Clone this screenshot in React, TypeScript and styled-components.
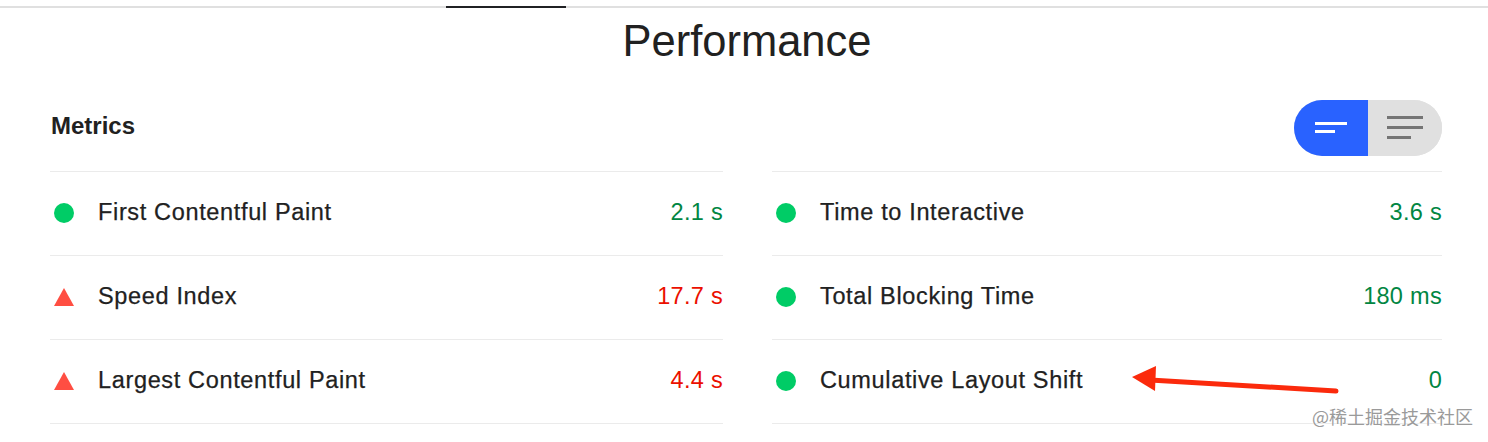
import React from 'react';
import styled, { createGlobalStyle } from 'styled-components';

const GlobalStyle = createGlobalStyle`
    html, body {
        margin: 0;
        padding: 0;
        background: #ffffff;
    }
    body {
        font-family: 'Liberation Sans', Arial, sans-serif;
        color: #212121;
    }
`;

const Page = styled.div`
    position: relative;
    width: 1488px;
    height: 442px;
    overflow: hidden;
    background: #fff;
`;

const TabRule = styled.div`
    margin-top: 6px;
    height: 2px;
    background: #e0e0e0;
    display: flex;
`;

const ActiveTab = styled.div`
    margin-left: 446px;
    width: 120px;
    background: #202124;
`;

const Title = styled.h1`
    margin: 0;
    padding-top: 8px;
    padding-left: 6px;
    text-align: center;
    font-size: 43.5px;
    font-weight: 400;
    line-height: 50px;
    color: #212121;
`;

const Section = styled.section`
    padding: 34px 46px 0 50px;
`;

const Header = styled.div`
    display: flex;
    align-items: center;
    justify-content: space-between;
    height: 56px;
    margin-bottom: 15px;
`;

const SectionTitle = styled.h2`
    margin: 0 0 4px 1px;
    font-size: 24px;
    font-weight: 700;
    color: #212121;
`;

const Toggle = styled.div`
    display: flex;
    width: 148px;
    height: 56px;
    border-radius: 28px;
    overflow: hidden;
    background: #e0e0e0;
`;

const ToggleHalf = styled.div<{ $active?: boolean }>`
    flex: 1;
    display: flex;
    align-items: center;
    justify-content: center;
    background: ${p => (p.$active ? '#2962ff' : '#e0e0e0')};
`;

const Grid = styled.div`
    display: grid;
    grid-template-columns: 673px 1fr;
    column-gap: 49px;
`;

const Column = styled.div`
    border-bottom: 1px solid #ebebeb;
`;

const Row = styled.div`
    box-sizing: border-box;
    display: flex;
    align-items: center;
    height: 84px;
    border-top: 1px solid #ebebeb;
    padding-bottom: 2px;
`;

const IconSlot = styled.div`
    width: 48px;
    padding-left: 4px;
    box-sizing: border-box;
    display: flex;
    align-items: center;
`;

const PassDot = styled.span`
    display: block;
    width: 20px;
    height: 20px;
    border-radius: 50%;
    background: #0c6;
`;

const FailTriangle = styled.span`
    display: block;
    width: 0;
    height: 0;
    border-left: 10px solid transparent;
    border-right: 10px solid transparent;
    border-bottom: 18px solid #ff4e42;
`;

const Label = styled.span`
    flex: 1;
    font-size: 23.5px;
    color: #212121;
    letter-spacing: 0.65px;
    -webkit-text-stroke: 0.25px #212121;
`;

const Value = styled.span<{ $fail?: boolean }>`
    font-size: 23.5px;
    letter-spacing: 0.3px;
    color: ${p => (p.$fail ? '#eb0f00' : '#018642')};
`;

const Arrow = styled.svg`
    position: absolute;
    left: 1120px;
    top: 356px;
`;

const Watermark = styled.div`
    position: absolute;
    right: 15px;
    top: 403px;
    font-family: 'Noto Sans CJK SC', 'Liberation Sans', sans-serif;
    font-size: 18px;
    color: #9a9a9a;
    text-shadow: 0 0 2px #fff;
`;

type Metric = { label: string; value: string; fail?: boolean };

const left: Metric[] = [
    { label: 'First Contentful Paint', value: '2.1 s' },
    { label: 'Speed Index', value: '17.7 s', fail: true },
    { label: 'Largest Contentful Paint', value: '4.4 s', fail: true },
];

const right: Metric[] = [
    { label: 'Time to Interactive', value: '3.6 s' },
    { label: 'Total Blocking Time', value: '180 ms' },
    { label: 'Cumulative Layout Shift', value: '0' },
];

function MetricColumn({ items }: { items: Metric[] }) {
    return (
        <Column>
            {items.map(m => (
                <Row key={m.label}>
                    <IconSlot>{m.fail ? <FailTriangle /> : <PassDot />}</IconSlot>
                    <Label>{m.label}</Label>
                    <Value $fail={m.fail}>{m.value}</Value>
                </Row>
            ))}
        </Column>
    );
}

export default function App() {
    return (
        <Page>
            <GlobalStyle />
            <TabRule>
                <ActiveTab />
            </TabRule>
            <Title>Performance</Title>
            <Section>
                <Header>
                    <SectionTitle>Metrics</SectionTitle>
                    <Toggle>
                        <ToggleHalf $active>
                            <svg width="32" height="12" viewBox="0 0 32 12">
                                <rect x="0" y="0" width="32" height="3" fill="#fff" />
                                <rect x="0" y="8" width="20" height="3" fill="#fff" />
                            </svg>
                        </ToggleHalf>
                        <ToggleHalf>
                            <svg width="36" height="24" viewBox="0 0 36 24">
                                <rect x="0" y="0" width="36" height="3" fill="#757575" />
                                <rect x="0" y="10" width="36" height="3" fill="#757575" />
                                <rect x="0" y="20" width="24" height="3" fill="#757575" />
                            </svg>
                        </ToggleHalf>
                    </Toggle>
                </Header>
                <Grid>
                    <MetricColumn items={left} />
                    <MetricColumn items={right} />
                </Grid>
            </Section>
            <Arrow width="230" height="45" viewBox="0 0 230 45">
                <line x1="30" y1="24" x2="216" y2="35" stroke="#fb2a0c" strokeWidth="5" strokeLinecap="round" />
                <polygon points="12,21 36,10 35,35" fill="#fb2a0c" />
            </Arrow>
            <Watermark>@稀土掘金技术社区</Watermark>
        </Page>
    );
}
